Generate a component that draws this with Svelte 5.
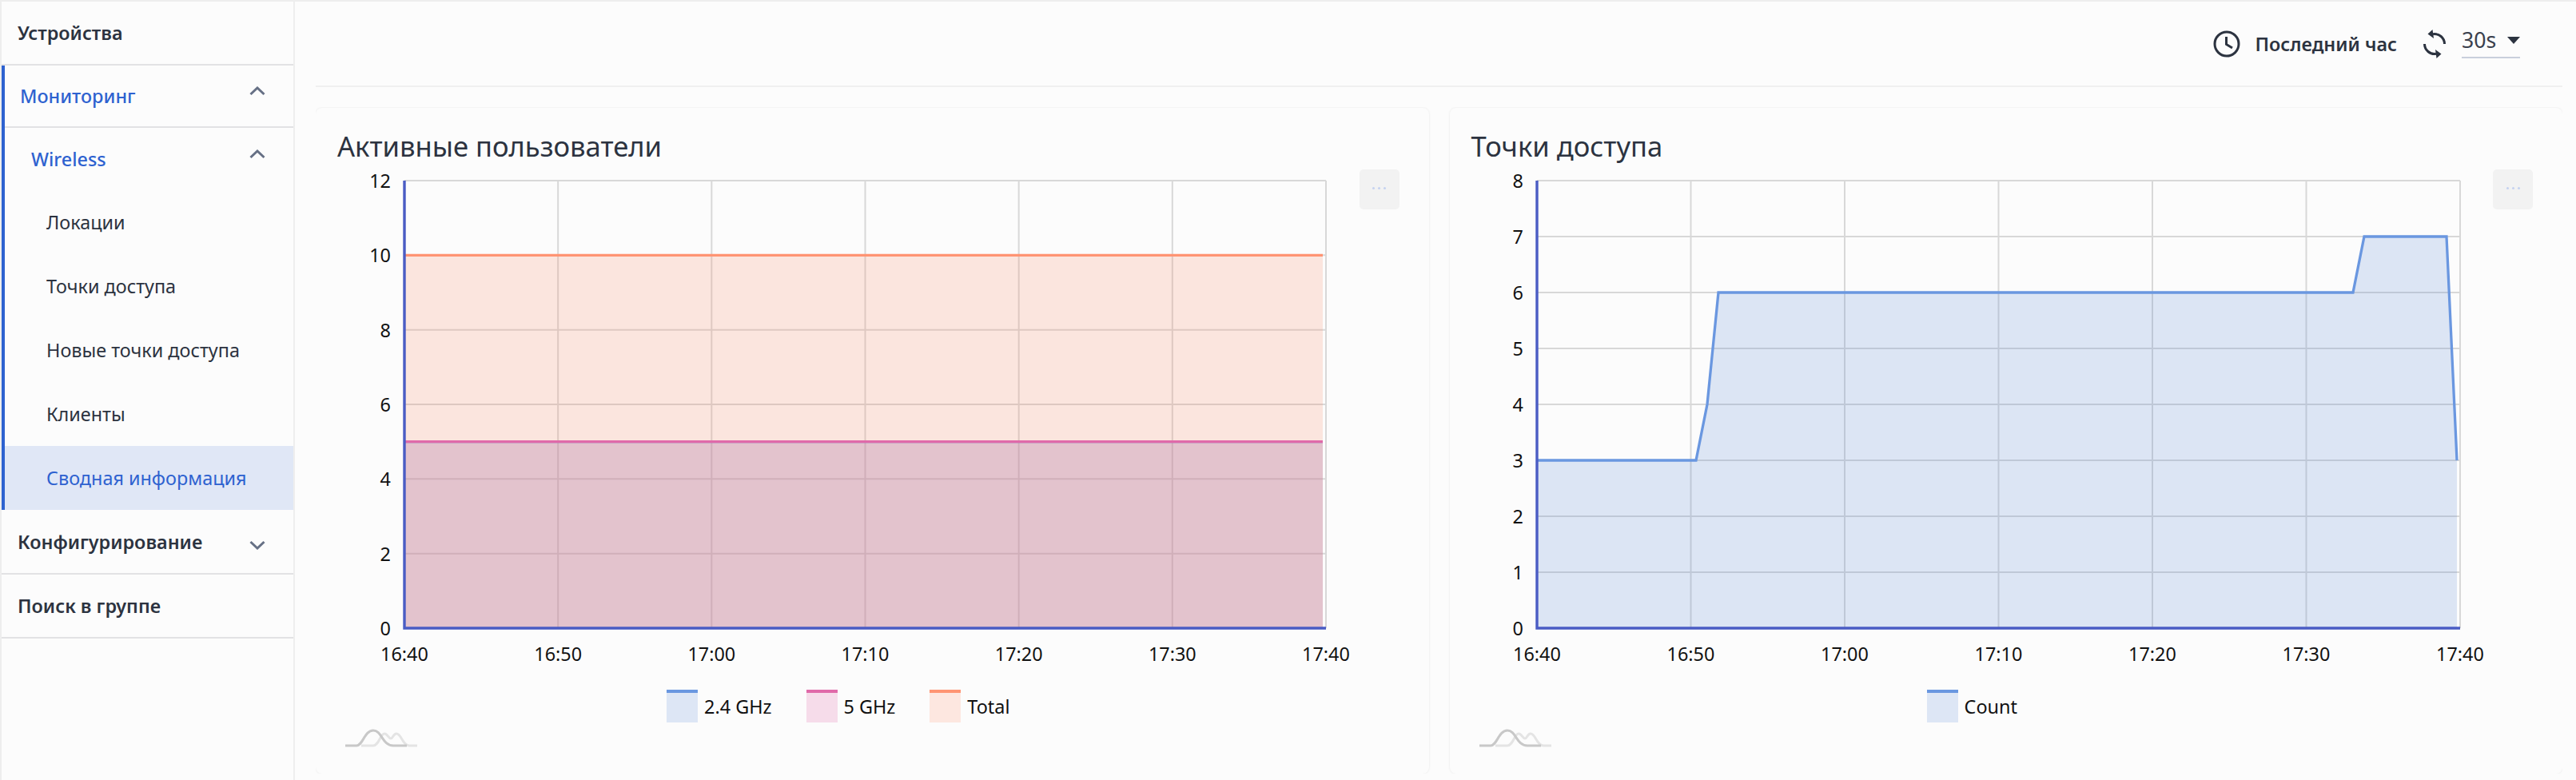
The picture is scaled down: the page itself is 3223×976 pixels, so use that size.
<script>
  const subItems = ['Локации', 'Точки доступа', 'Новые точки доступа', 'Клиенты']
  const times = ['16:40', '16:50', '17:00', '17:10', '17:20', '17:30', '17:40']

  const blue = '#618ed9'
  const pink = '#de5ca2'
  const orange = '#fc8e6b'

  const users = {
    title: 'Активные пользователи',
    left: 111, width: 1153, max: 12, step: 2,
    series: [
      { color: blue, line: '#6a97e0', opacity: 0.18, pts: [[0, 5], [1149, 5]] },
      { color: pink, line: '#e06aa9', opacity: 0.17, pts: [[0, 5], [1149, 5]] },
      { color: orange, line: '#ff9473', opacity: 0.2, pts: [[0, 10], [1149, 10]] }
    ],
    legend: [
      { name: '2.4 GHz', fill: '#dde6f5', line: '#6a97e0' },
      { name: '5 GHz', fill: '#f6dcea', line: '#e06aa9' },
      { name: 'Total', fill: '#fde7e0', line: '#ff9473' }
    ]
  }

  const points = {
    title: 'Точки доступа',
    left: 109, width: 1155, max: 8, step: 1,
    series: [
      {
        color: blue, line: '#6a97e0', opacity: 0.2,
        pts: [[0, 3], [199, 3], [213, 4], [227, 6], [1021, 6], [1035, 7], [1138, 7], [1151, 3]]
      }
    ],
    legend: [{ name: 'Count', fill: '#dde6f5', line: '#6a97e0' }]
  }

  // plot box inside the svg
  const top = 21
  const plotH = 560

  function yPos(c, v) {
    return top + plotH - (v / c.max) * plotH
  }

  function yTicks(c) {
    let out = []
    for (let v = 0; v <= c.max; v += c.step) out.push(v)
    return out
  }

  function xPos(c, i) {
    return c.left + (i * c.width) / 6
  }

  function linePath(c, s) {
    return s.pts.map((p, i) => (i ? 'L' : 'M') + (c.left + p[0]) + ' ' + yPos(c, p[1])).join(' ')
  }

  function areaPath(c, s) {
    let last = s.pts[s.pts.length - 1]
    return linePath(c, s) + ' L' + (c.left + last[0]) + ' ' + yPos(c, 0) + ' L' + c.left + ' ' + yPos(c, 0) + ' Z'
  }
</script>

{#snippet chevron(up)}
  <svg class="chevron" class:down={!up} width="20" height="12" viewBox="0 0 20 12">
    <path d={up ? 'M1.5 10 L10 2 L18.5 10' : 'M1.5 2 L10 10 L18.5 2'} fill="none" stroke="#667085" stroke-width="3" />
  </svg>
{/snippet}

{#snippet chart(c)}
  <section class="card">
    <h2>{c.title}</h2>
    <div class="more"><i></i><i></i><i></i></div>
    <svg class="plot" width="1392" height="640" viewBox="0 0 1392 640">
      {#each yTicks(c) as v}
        <line x1={c.left} x2={c.left + c.width} y1={yPos(c, v)} y2={yPos(c, v)} stroke="#d8d8d8" stroke-width="2" />
        <text class="tick" x={c.left - 17} y={yPos(c, v) + 9} text-anchor="end">{v}</text>
      {/each}
      {#each times as t, i}
        <line x1={xPos(c, i)} x2={xPos(c, i)} y1={top} y2={top + plotH} stroke="#d8d8d8" stroke-width="2" />
        <text class="tick" x={xPos(c, i)} y={top + plotH + 41} text-anchor="middle">{t}</text>
      {/each}
      {#each c.series as s}
        <path d={areaPath(c, s)} fill={s.color} fill-opacity={s.opacity} />
      {/each}
      {#each c.series as s}
        <path d={linePath(c, s)} fill="none" stroke={s.line} stroke-width="3.3" />
      {/each}
      <path d="M{c.left} {top} V{top + plotH} H{c.left + c.width}" fill="none" stroke="#4a5cc4" stroke-width="3.4" />
    </svg>
    <div class="legend">
      {#each c.legend as l}
        <div class="legend-item">
          <span class="swatch" style="background: {l.fill}; border-top-color: {l.line}"></span>
          {l.name}
        </div>
      {/each}
    </div>
    <svg class="logo" width="90" height="24" viewBox="0 0 90 24">
      <path d="M20 22 H35 C42 22 44 7 49 7 C53 7 54 13 57 13 C60 13 60 7 64 7 C70 7 72 22 80 22 H90" fill="none" stroke="#e4e4e4" stroke-width="3" />
      <path d="M0 22 H14 C22 22 24 3 35 3 C46 3 46 22 60 22 H77" fill="none" stroke="#c8c8c8" stroke-width="3" />
    </svg>
  </section>
{/snippet}

<div class="page">
  <nav class="sidebar">
    <div class="row head">Устройства</div>
    <div class="group">
      <div class="row head active">
        Мониторинг
        {@render chevron(true)}
      </div>
      <div class="row sub">
        Wireless
        {@render chevron(true)}
      </div>
      {#each subItems as item}
        <div class="item">{item}</div>
      {/each}
      <div class="item selected">Сводная информация</div>
    </div>
    <div class="row head config">
      Конфигурирование
      {@render chevron(false)}
    </div>
    <div class="row head search">Поиск в группе</div>
  </nav>

  <main>
    <header>
      <svg width="34" height="34" viewBox="0 0 34 34">
        <circle cx="17" cy="17" r="15" fill="none" stroke="#2c3340" stroke-width="3" />
        <path d="M16.5 8 V17.5 L24 22" fill="none" stroke="#2c3340" stroke-width="3" />
      </svg>
      <span class="range">Последний час</span>
      <svg class="sync" width="28" height="36" viewBox="0 0 28 36">
        <path d="M12 5.7 A12.5 12.5 0 0 1 26.5 18 M16 30.3 A12.5 12.5 0 0 1 1.5 18" fill="none" stroke="#2c3340" stroke-width="3" />
        <path d="M11.5 0 L13 11 L5.5 5.5 Z M16.5 36 L15 25 L22.5 30.5 Z" fill="#2c3340" />
      </svg>
      <div class="select">
        30s
        <span class="caret"></span>
      </div>
    </header>

    <div class="cards">
      {@render chart(users)}
      {@render chart(points)}
    </div>
  </main>
</div>

<style>
  :global(body) {
    background: #fcfcfc;
  }

  .page {
    display: flex;
    height: 976px;
    box-sizing: border-box;
    border-top: 2px solid #eeeeee;
    font-family: "Noto Sans", sans-serif;
    color: #2c3340;
    overflow: hidden;
  }

  .sidebar {
    width: 369px;
    flex: none;
    box-sizing: border-box;
    border-left: 2px solid #eeeeee;
    border-right: 2px solid #eeeeee;
    font-size: 23.4px;
  }

  .row {
    display: flex;
    align-items: center;
    justify-content: space-between;
    box-sizing: border-box;
    padding-right: 35px;
  }

  .head {
    height: 80px;
    padding-left: 20px;
    font-weight: 600;
    border-bottom: 2px solid #e2e2e4;
  }

  .group {
    border-left: 4px solid #2e62d0;
  }

  .head.active {
    height: 78px;
    padding-left: 19px;
    color: #2e62d0;
    font-weight: 500;
  }

  .sub {
    height: 78px;
    padding-left: 33px;
    color: #2e62d0;
    font-weight: 500;
  }

  .item {
    height: 80px;
    line-height: 80px;
    padding-left: 52px;
  }

  .selected {
    background: #e0e7f6;
    color: #2e62d0;
  }

  .config {
    height: 81px;
  }

  .search {
    height: 80px;
  }

  .chevron {
    margin-bottom: 12px;
  }

  .chevron.down {
    margin-bottom: -8px;
  }

  main {
    flex: 1;
    min-width: 0;
    padding: 0 17px 0 26px;
  }

  header {
    display: flex;
    align-items: center;
    justify-content: flex-end;
    height: 107px;
    box-sizing: border-box;
    padding-right: 53px;
    border-bottom: 2px solid #f0f0f0;
  }

  .range {
    margin-left: 18px;
    font-size: 23.4px;
    font-weight: 600;
  }

  .sync {
    margin-left: 33px;
  }

  .select {
    display: flex;
    align-items: center;
    justify-content: space-between;
    width: 73px;
    height: 37px;
    box-sizing: border-box;
    margin-left: 20px;
    padding-bottom: 7px;
    border-bottom: 2px solid #c9cfdc;
    font-size: 26.6px;
    line-height: 30px;
    color: #3a404d;
  }

  .caret {
    width: 0;
    height: 0;
    border-left: 8px solid transparent;
    border-right: 8px solid transparent;
    border-top: 9px solid #2c3340;
  }

  .cards {
    display: grid;
    grid-template-columns: 1fr 1fr;
    gap: 26px;
    margin-top: 26px;
  }

  .card {
    position: relative;
    height: 833px;
    padding-top: 27px;
    box-sizing: border-box;
    border-radius: 8px;
    box-shadow: 0 0 3px rgba(0, 0, 0, 0.09);
    overflow: hidden;
  }

  .card:first-child {
    clip-path: inset(-1px -6px 0 0 round 0 8px 8px 0);
  }

  .card:last-child {
    clip-path: inset(-1px 0 0 -6px round 8px 0 0 8px);
  }

  h2 {
    margin: 0;
    padding-left: 27px;
    font-size: 34.6px;
    line-height: 42px;
    font-weight: 400;
  }

  .more {
    position: absolute;
    top: 77px;
    right: 37px;
    display: flex;
    align-items: center;
    justify-content: center;
    gap: 4px;
    width: 50px;
    height: 50px;
    padding-bottom: 4px;
    box-sizing: border-box;
    background: #f2f2f2;
    border-radius: 5px;
  }

  .more i {
    width: 3px;
    height: 3px;
    border-radius: 50%;
    background: #c5d3f0;
  }

  .plot {
    display: block;
    margin-top: 1px;
  }

  .tick {
    font-size: 23.4px;
    fill: #111111;
  }

  .legend {
    display: flex;
    justify-content: center;
    gap: 43px;
    margin-top: 18px;
    padding-right: 85px;
    font-size: 23.4px;
    color: #111111;
  }

  .legend-item {
    display: flex;
    align-items: center;
    gap: 8px;
  }

  .swatch {
    width: 39px;
    height: 41px;
    box-sizing: border-box;
    border-top: 4px solid;
  }

  .logo {
    display: block;
    margin: 7px 0 0 37px;
  }
</style>
